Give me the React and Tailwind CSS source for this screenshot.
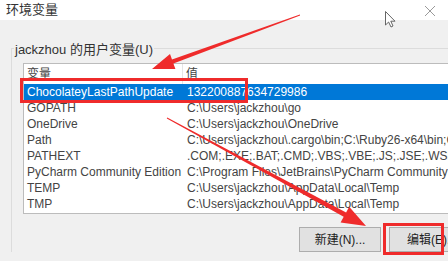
import React from 'react';

const rows = [
  ['ChocolateyLastPathUpdate', '132200887634729986'],
  ['GOPATH', 'C:\\Users\\jackzhou\\go'],
  ['OneDrive', 'C:\\Users\\jackzhou\\OneDrive'],
  ['Path', 'C:\\Users\\jackzhou\\.cargo\\bin;C:\\Ruby26-x64\\bin;C:\\Users'],
  ['PATHEXT', '.COM;.EXE;.BAT;.CMD;.VBS;.VBE;.JS;.JSE;.WSF;.WSH;.MSC'],
  ['PyCharm Community Edition', 'C:\\Program Files\\JetBrains\\PyCharm Community Edition'],
  ['TEMP', 'C:\\Users\\jackzhou\\AppData\\Local\\Temp'],
  ['TMP', 'C:\\Users\\jackzhou\\AppData\\Local\\Temp'],
];

const font = { fontFamily: '"Liberation Sans", "Noto Sans CJK SC", sans-serif' };

function Annotations() {
  // red arrows + mouse pointer drawn over the dialog
  return (
    <svg className="absolute inset-0 pointer-events-none" width="448" height="261" viewBox="0 0 448 261">
      <polygon
        fill="#ef2b2b"
        points="300.1,15.4 173.4,63.4 175.4,69 152,69 170,54 172,59.6 299.9,14.6"
      />
      <polygon
        fill="#ef2b2b"
        points="166.8,118.4 343.7,216.8 340.6,222.5 366,226 349.2,206.7 346.1,212.4 167.2,117.6"
      />
      <path
        d="M385.5 11.5 L385.5 25 L388.6 22 L391 27 L393 26 L390.8 21.2 L395 21.2 Z"
        fill="#fff"
        stroke="#555"
        strokeWidth="0.9"
        strokeLinejoin="round"
      />
      <path d="M425 6 L435 16 M435 6 L425 16" stroke="#9a9a9a" strokeWidth="1" />
    </svg>
  );
}

export default function App() {
  return (
    <div className="relative w-[448px] h-[261px] overflow-hidden bg-[#f0f0f0] text-[#222]" style={font}>
      {/* title bar */}
      <div className="h-[20px] bg-white pl-[6px] flex items-center">
        <span className="text-[13px] leading-none -mt-[2px] text-[#333]">环境变量</span>
      </div>

      {/* group box */}
      <div className="pl-[11px] pt-[28px]">
        <div className="relative w-[600px] border-t border-l border-[#dcdcdc] pl-[11px] pt-[14px]">
          <span className="absolute -top-[8px] left-[2px] bg-[#f0f0f0] px-[1px] text-[13px] leading-[18px] text-[#333]">
            jackzhou 的用户变量(U)
          </span>

          <div className="w-[560px] h-[151px] border border-[#bcbcbc] bg-white text-[12px] text-[#444]">
            <div className="flex h-[20px] items-center">
              <div className="w-[159px] pl-[3px] border-r border-[#e5e5e5] h-full flex items-center">变量</div>
              <div className="pl-[3px]">值</div>
            </div>
            {rows.map(([name, value], i) => (
              <div
                key={name}
                className={
                  'flex h-[16px] items-center whitespace-nowrap ' +
                  (i === 0 ? 'bg-[#0078d7] text-white' : '')
                }
              >
                <div className="w-[160px] pl-[3px] overflow-hidden">{name}</div>
                <div className="pl-[3px]">{value}</div>
              </div>
            ))}
          </div>

          <div className="flex gap-[8px] mt-[13px] ml-[276px]">
            <button className="w-[82px] h-[25px] bg-[#e1e1e1] border border-[#adadad] text-[12px] text-[#222]">
              新建(N)...
            </button>
            <button className="w-[82px] h-[25px] bg-[#e1e1e1] border border-[#adadad] text-[12px] text-[#222] text-left pl-[17px]">
              编辑(E)...
            </button>
          </div>
        </div>
      </div>

      {/* red highlight boxes */}
      <div className="absolute left-[20px] top-[78px] w-[228px] h-[25px] border-[3px] border-[#ef2b2b]" />
      <div className="absolute left-[383px] top-[223px] w-[61px] h-[32px] border-[3px] border-[#ef2b2b]" />

      <Annotations />
    </div>
  );
}
